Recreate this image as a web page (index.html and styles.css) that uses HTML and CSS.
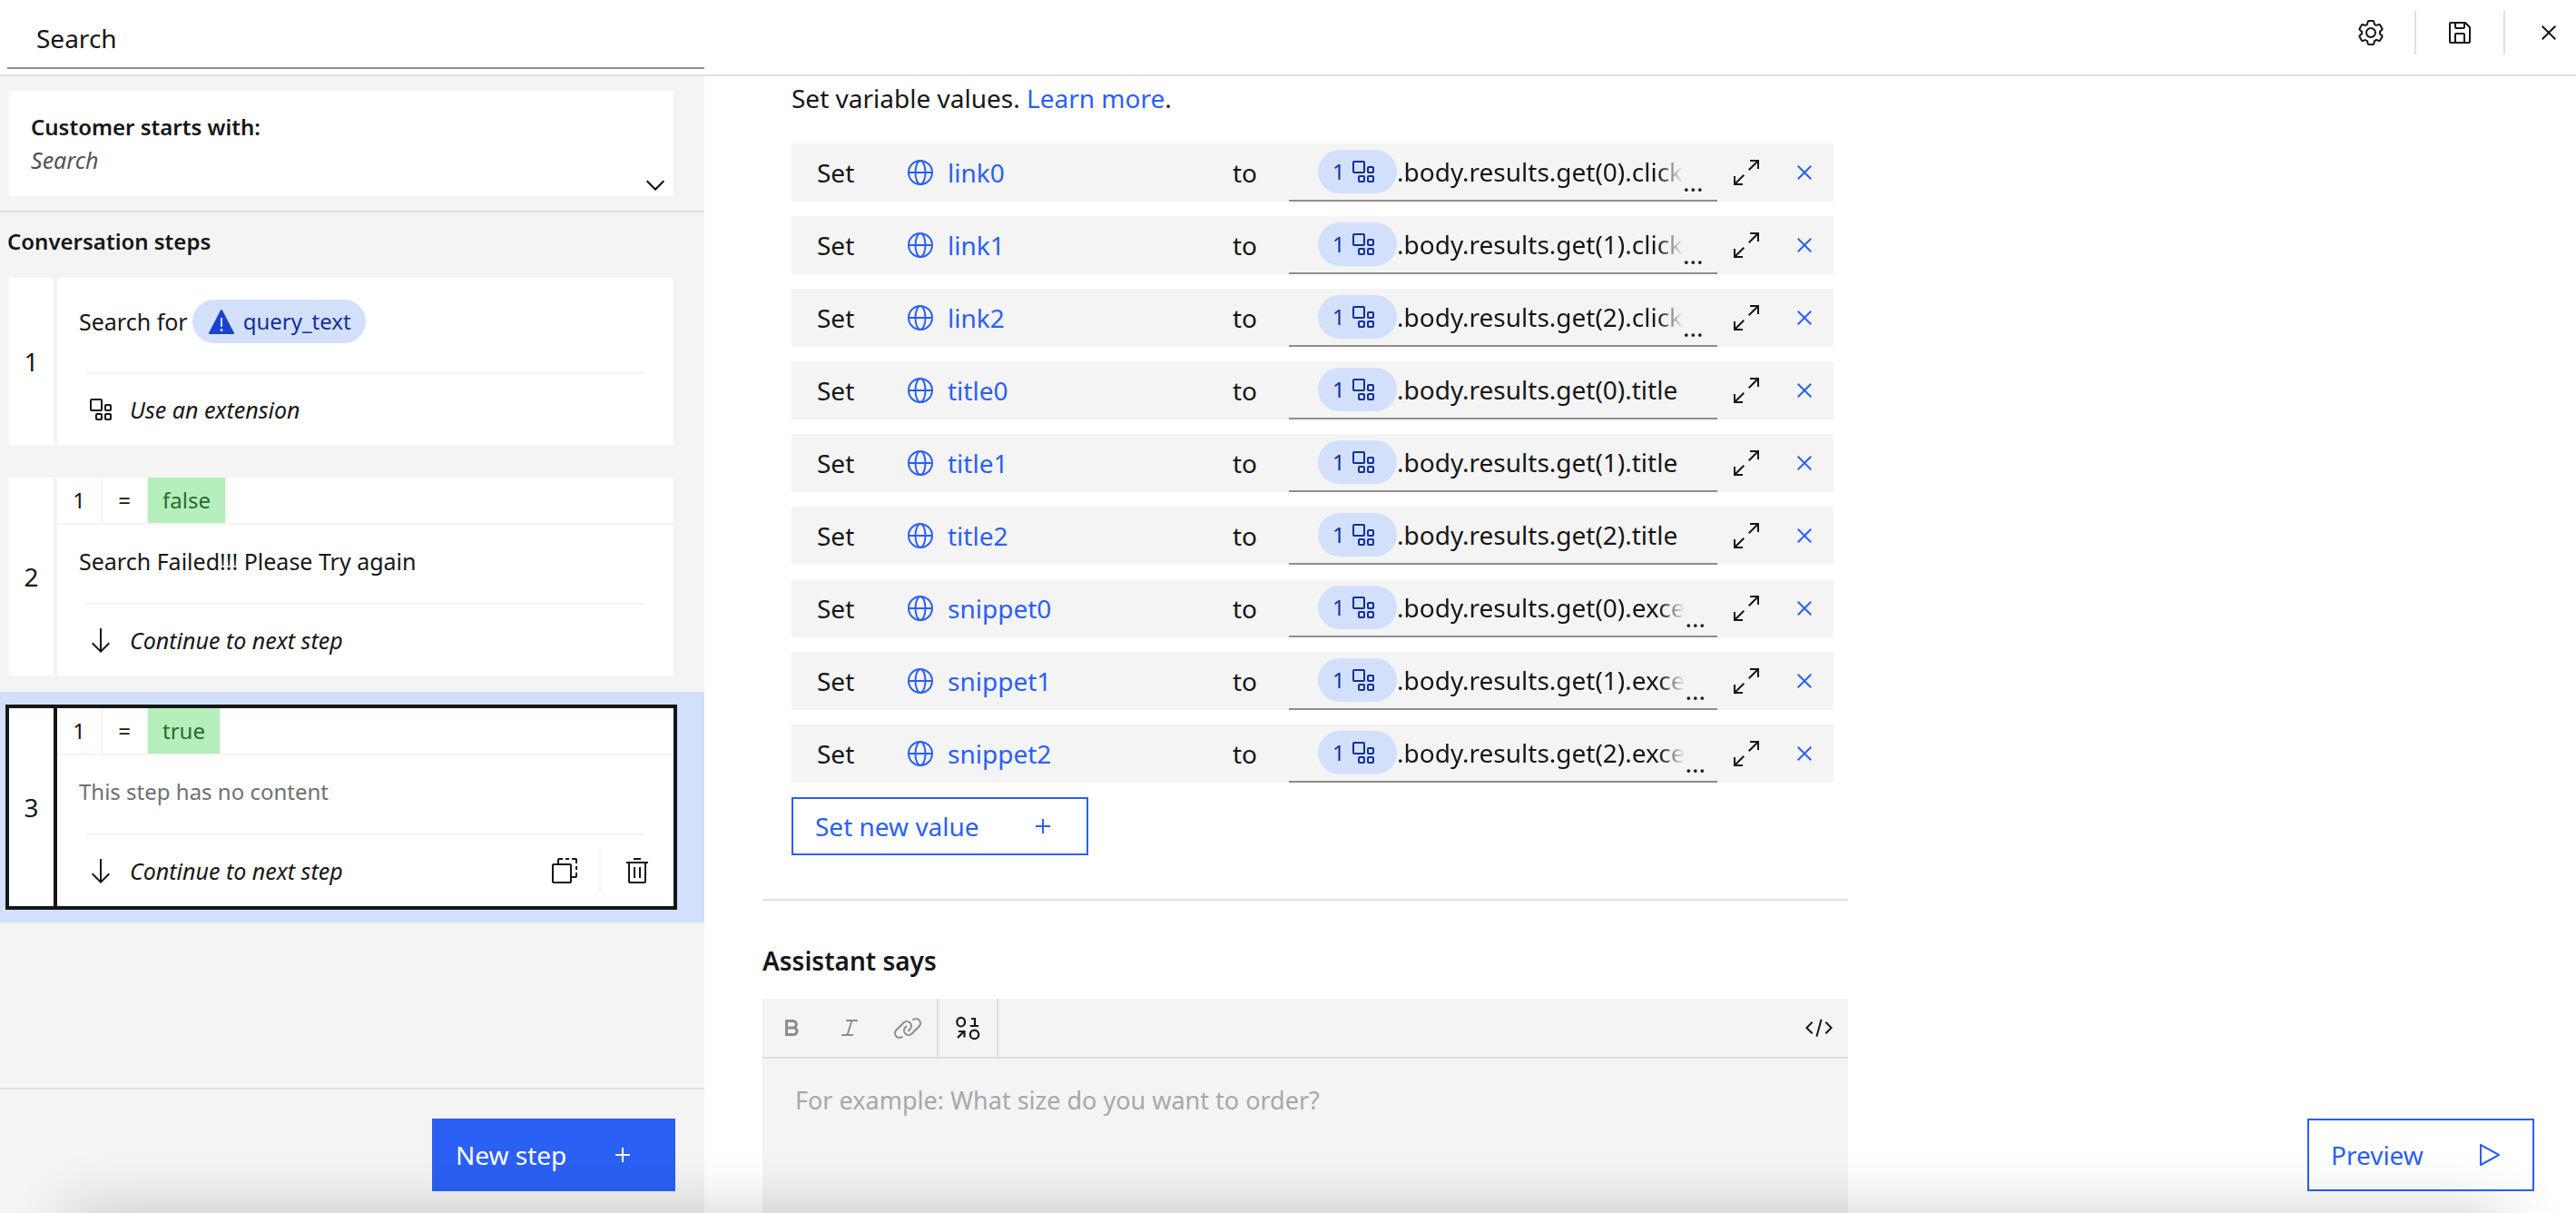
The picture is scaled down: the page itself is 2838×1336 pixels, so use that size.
FILE: index.html
```html
<!DOCTYPE html>
<html lang="en">
<head>
<meta charset="utf-8">
<title>Search</title>
<link rel="stylesheet" href="styles.css">
</head>
<body>
<svg class="sprite" aria-hidden="true">
  <symbol id="gear" viewBox="0 0 32 32"><path d="M27 16.76v-1.53l1.92-1.68A2 2 0 0 0 29.3 11l-2.36-4a2 2 0 0 0-1.73-1 2 2 0 0 0-.64.1l-2.43.82a11.35 11.35 0 0 0-1.31-.75l-.51-2.52a2 2 0 0 0-2-1.61h-4.68a2 2 0 0 0-2 1.61l-.51 2.52a11.48 11.48 0 0 0-1.32.75l-2.38-.86A2 2 0 0 0 6.79 6a2 2 0 0 0-1.73 1L2.7 11a2 2 0 0 0 .41 2.51L5 15.24v1.53l-1.89 1.68A2 2 0 0 0 2.7 21l2.36 4a2 2 0 0 0 1.73 1 2 2 0 0 0 .64-.1l2.43-.82a11.35 11.35 0 0 0 1.31.75l.51 2.52a2 2 0 0 0 2 1.61h4.72a2 2 0 0 0 2-1.61l.51-2.52a11.48 11.48 0 0 0 1.32-.75l2.42.82a2 2 0 0 0 .64.1 2 2 0 0 0 1.73-1l2.28-4a2 2 0 0 0-.41-2.51zM25.21 24l-3.43-1.16a8.86 8.86 0 0 1-2.71 1.57L18.36 28h-4.72l-.71-3.55a9.36 9.36 0 0 1-2.7-1.57L6.79 24l-2.36-4 2.72-2.4a8.9 8.9 0 0 1 0-3.13L4.43 12l2.36-4 3.43 1.16a8.86 8.86 0 0 1 2.71-1.57L13.64 4h4.72l.71 3.55a9.36 9.36 0 0 1 2.7 1.57L25.21 8l2.36 4-2.72 2.4a8.9 8.9 0 0 1 0 3.13L27.57 20z"/><path d="M16 22a6 6 0 1 1 6-6 5.94 5.94 0 0 1-6 6zm0-10a3.91 3.91 0 0 0-4 4 3.91 3.91 0 0 0 4 4 3.91 3.91 0 0 0 4-4 3.91 3.91 0 0 0-4-4z"/></symbol>
  <symbol id="save" viewBox="0 0 32 32"><path d="M27.71 9.29l-5-5A1 1 0 0 0 22 4H6a2 2 0 0 0-2 2v20a2 2 0 0 0 2 2h20a2 2 0 0 0 2-2V10a1 1 0 0 0-.29-.71zM12 6h8v4h-8zm8 20h-8v-8h8zm2 0v-8a2 2 0 0 0-2-2h-8a2 2 0 0 0-2 2v8H6V6h4v4a2 2 0 0 0 2 2h8a2 2 0 0 0 2-2V6.41l4 4V26z"/></symbol>
  <symbol id="close" viewBox="0 0 32 32"><path d="M24 9.4 22.6 8 16 14.6 9.4 8 8 9.4l6.6 6.6L8 22.6 9.4 24l6.6-6.6 6.6 6.6 1.4-1.4-6.6-6.6z"/></symbol>
  <symbol id="plus" viewBox="0 0 32 32"><path d="M17 15V8h-2v7H8v2h7v7h2v-7h7v-2z"/></symbol>
  <symbol id="chevron" viewBox="0 4 32 24"><path d="M16 22 6 12l1.4-1.4 8.6 8.6 8.6-8.6L26 12z"/></symbol>
  <symbol id="down" viewBox="0 0 32 32"><path d="M24.6 18.6 17 26.2V3h-2v23.2l-7.6-7.6L6 20l10 10 10-10z"/></symbol>
  <symbol id="extension" viewBox="0 0 32 32"><g fill="none" stroke="currentColor" stroke-width="2"><rect x="5" y="5" width="12" height="12" rx="1"/><rect x="21" y="11" width="6" height="6" rx="1"/><rect x="11" y="21" width="6" height="6" rx="1"/><rect x="21" y="21" width="6" height="6" rx="1"/></g></symbol>
  <symbol id="warning" viewBox="0 0 32 32"><path d="M29.9 28.6l-13-25a1 1 0 0 0-1.8 0l-13 25A1 1 0 0 0 3 30h26a1 1 0 0 0 .9-1.4z"/><path class="warning-mark" d="M15 12h2v10h-2zM16 24a1.500 1.500 0 1 1 0 3 1.500 1.500 0 0 1 0-3z"/></symbol>
  <symbol id="copy" viewBox="0 0 32 32"><path fill="none" stroke="currentColor" stroke-width="2" d="M4 9h18a1 1 0 0 1 1 1v18a1 1 0 0 1-1 1H4a1 1 0 0 1-1-1V10a1 1 0 0 1 1-1zM9 8V4a1 1 0 0 1 1-1h4M17 3h4M24 3h4a1 1 0 0 1 1 1v4M29 11v4M29 18v4a1 1 0 0 1-1 1h-4"/></symbol>
  <symbol id="trash" viewBox="0 0 32 32"><path d="M12 12h2v12h-2zM18 12h2v12h-2zM4 6v2h2v20a2 2 0 0 0 2 2h16a2 2 0 0 0 2-2V8h2V6zm4 22V8h16v20zM12 2h8v2h-8z"/></symbol>
  <symbol id="globe" viewBox="0 0 32 32"><g fill="none" stroke="currentColor" stroke-width="2"><circle cx="16" cy="16" r="13"/><ellipse cx="16" cy="16" rx="5.5" ry="13"/><path d="M3 16h26"/></g></symbol>
  <symbol id="expand" viewBox="0 0 32 32"><path d="M20 2v2h6.6L18 12.6l1.4 1.4L28 5.4V12h2V2zM14 19.4 12.6 18 4 26.6V20H2v10h10v-2H5.400z"/></symbol>
  <symbol id="bold" viewBox="0 0 32 32"><path d="M18.25 25H9V7h8.5a5.25 5.25 0 0 1 4 8.65A5.25 5.25 0 0 1 18.25 25zM12 22h6.23a2.25 2.25 0 1 0 0-4.5H12zm0-7.5h5.5a2.25 2.25 0 1 0 0-4.5H12z"/></symbol>
  <symbol id="italic" viewBox="0 0 32 32"><path d="M25 9V7H12v2h5.14l-4.37 14H7v2h13v-2h-5.14l4.37-14z"/></symbol>
  <symbol id="link" viewBox="0 0 32 32"><path d="M29.25 6.76a6 6 0 0 0-8.5 0l1.42 1.42a4 4 0 1 1 5.67 5.67l-8 8a4 4 0 1 1-5.67-5.66l1.41-1.42-1.41-1.42-1.42 1.42a6 6 0 0 0 0 8.5A6 6 0 0 0 17 25a6 6 0 0 0 4.27-1.76l8-8a6 6 0 0 0-.02-8.48z"/><path d="M4.19 24.82a4 4 0 0 1 0-5.67l8-8a4 4 0 0 1 5.67 0A3.94 3.94 0 0 1 19 14a4 4 0 0 1-1.17 2.85L15.71 19l1.42 1.42 2.12-2.12a6 6 0 0 0-8.51-8.51l-8 8a6 6 0 0 0 0 8.51A6 6 0 0 0 7 28a6.07 6.07 0 0 0 4.28-1.76l-1.42-1.42a4 4 0 0 1-5.67 0z"/></symbol>
  <symbol id="variable" viewBox="0 0 32 32"><g fill="none" stroke="currentColor" stroke-width="2.200"><ellipse cx="8.700" cy="9.700" rx="4.400" ry="4.800"/><ellipse cx="23.500" cy="23.400" rx="4.700" ry="4.800"/><path d="M20 6h4v8M19 14h9M5 27l7-7M6 20h6.500v6.500"/></g></symbol>
  <symbol id="code" viewBox="0 0 32 32"><path d="M31 16l-7 7-1.41-1.41L28.17 16l-5.58-5.59L24 9zM1 16l7-7 1.41 1.41L3.83 16l5.58 5.59L8 23zM12.42 25.48l5.22-18.93 1.93.53-5.22 18.94z"/></symbol>
  <symbol id="play" viewBox="0 0 32 32"><path d="M7 28a1 1 0 0 1-1-1V5a1 1 0 0 1 1.48-.88l20 11a1 1 0 0 1 0 1.76l-20 11A1 1 0 0 1 7 28zM8 6.69v18.62L24.93 16z"/></symbol>
</svg>

<header class="header">
  <input class="title-input" type="text" value="Search" aria-label="Action name">
  <div class="header-actions">
    <button class="header-button" type="button" aria-label="Settings"><svg class="icon"><use href="#gear"/></svg></button>
    <button class="header-button" type="button" aria-label="Save"><svg class="icon"><use href="#save"/></svg></button>
    <button class="header-button" type="button" aria-label="Close"><svg class="icon"><use href="#close"/></svg></button>
  </div>
</header>

<div class="workspace">
  <aside class="sidebar">
    <section class="trigger">
      <div class="trigger-card">
        <div class="trigger-text">
          <h2 class="trigger-title">Customer starts with:</h2>
          <p class="trigger-phrase">Search</p>
        </div>
        <button class="trigger-toggle" type="button" aria-label="Show phrases"><svg class="chevron"><use href="#chevron"/></svg></button>
      </div>
    </section>

    <div class="steps">
      <h2 class="steps-title">Conversation steps</h2>
      <ol class="step-list">
        <li class="step">
          <article class="step-card">
            <div class="step-number">1</div>
            <div class="step-body">
              <p class="step-text">Search for <span class="pill"><svg class="icon pill-warning"><use href="#warning"/></svg>query_text</span></p>
              <div class="step-footer"><svg class="icon"><use href="#extension"/></svg><span class="step-next">Use an extension</span></div>
            </div>
          </article>
        </li>
        <li class="step">
          <article class="step-card">
            <div class="step-number">2</div>
            <div class="step-body">
              <div class="condition"><span class="condition-cell">1</span><span class="condition-cell">=</span><span class="condition-cell condition-value">false</span></div>
              <p class="step-text">Search Failed!!! Please Try again</p>
              <div class="step-footer"><svg class="icon"><use href="#down"/></svg><span class="step-next">Continue to next step</span></div>
            </div>
          </article>
        </li>
        <li class="step step-selected">
          <article class="step-card">
            <div class="step-number">3</div>
            <div class="step-body">
              <div class="condition"><span class="condition-cell">1</span><span class="condition-cell">=</span><span class="condition-cell condition-value">true</span></div>
              <p class="step-text step-empty">This step has no content</p>
              <div class="step-footer"><svg class="icon"><use href="#down"/></svg><span class="step-next">Continue to next step</span>
                <div class="step-tools">
                  <button class="step-tool" type="button" aria-label="Duplicate step"><svg class="icon"><use href="#copy"/></svg></button>
                  <button class="step-tool" type="button" aria-label="Delete step"><svg class="icon"><use href="#trash"/></svg></button>
                </div>
              </div>
            </div>
          </article>
        </li>
      </ol>
    </div>

    <div class="sidebar-footer">
      <button class="button button-primary" type="button">New step<svg class="icon"><use href="#plus"/></svg></button>
    </div>
  </aside>

  <main class="editor">
    <section class="variables">
      <p class="variables-intro">Set variable values. <a class="link" href="#">Learn more</a>.</p>
      <ul class="variable-list">
        <li class="variable">
          <span class="variable-set">Set</span>
          <button class="variable-name" type="button"><svg class="icon"><use href="#globe"/></svg>link0</button>
          <span>to</span>
          <div class="expression expression-clipped"><div class="expression-text"><span class="pill pill-step">1<svg class="icon"><use href="#extension"/></svg></span>.body.results.get(0).click</div><span class="expression-more">...</span></div>
          <button class="row-button" type="button" aria-label="Expand link0"><svg class="icon"><use href="#expand"/></svg></button>
          <button class="row-button row-remove" type="button" aria-label="Remove link0"><svg class="icon"><use href="#close"/></svg></button>
        </li>
        <li class="variable">
          <span class="variable-set">Set</span>
          <button class="variable-name" type="button"><svg class="icon"><use href="#globe"/></svg>link1</button>
          <span>to</span>
          <div class="expression expression-clipped"><div class="expression-text"><span class="pill pill-step">1<svg class="icon"><use href="#extension"/></svg></span>.body.results.get(1).click</div><span class="expression-more">...</span></div>
          <button class="row-button" type="button" aria-label="Expand link1"><svg class="icon"><use href="#expand"/></svg></button>
          <button class="row-button row-remove" type="button" aria-label="Remove link1"><svg class="icon"><use href="#close"/></svg></button>
        </li>
        <li class="variable">
          <span class="variable-set">Set</span>
          <button class="variable-name" type="button"><svg class="icon"><use href="#globe"/></svg>link2</button>
          <span>to</span>
          <div class="expression expression-clipped"><div class="expression-text"><span class="pill pill-step">1<svg class="icon"><use href="#extension"/></svg></span>.body.results.get(2).click</div><span class="expression-more">...</span></div>
          <button class="row-button" type="button" aria-label="Expand link2"><svg class="icon"><use href="#expand"/></svg></button>
          <button class="row-button row-remove" type="button" aria-label="Remove link2"><svg class="icon"><use href="#close"/></svg></button>
        </li>
        <li class="variable">
          <span class="variable-set">Set</span>
          <button class="variable-name" type="button"><svg class="icon"><use href="#globe"/></svg>title0</button>
          <span>to</span>
          <div class="expression"><div class="expression-text"><span class="pill pill-step">1<svg class="icon"><use href="#extension"/></svg></span>.body.results.get(0).title</div></div>
          <button class="row-button" type="button" aria-label="Expand title0"><svg class="icon"><use href="#expand"/></svg></button>
          <button class="row-button row-remove" type="button" aria-label="Remove title0"><svg class="icon"><use href="#close"/></svg></button>
        </li>
        <li class="variable">
          <span class="variable-set">Set</span>
          <button class="variable-name" type="button"><svg class="icon"><use href="#globe"/></svg>title1</button>
          <span>to</span>
          <div class="expression"><div class="expression-text"><span class="pill pill-step">1<svg class="icon"><use href="#extension"/></svg></span>.body.results.get(1).title</div></div>
          <button class="row-button" type="button" aria-label="Expand title1"><svg class="icon"><use href="#expand"/></svg></button>
          <button class="row-button row-remove" type="button" aria-label="Remove title1"><svg class="icon"><use href="#close"/></svg></button>
        </li>
        <li class="variable">
          <span class="variable-set">Set</span>
          <button class="variable-name" type="button"><svg class="icon"><use href="#globe"/></svg>title2</button>
          <span>to</span>
          <div class="expression"><div class="expression-text"><span class="pill pill-step">1<svg class="icon"><use href="#extension"/></svg></span>.body.results.get(2).title</div></div>
          <button class="row-button" type="button" aria-label="Expand title2"><svg class="icon"><use href="#expand"/></svg></button>
          <button class="row-button row-remove" type="button" aria-label="Remove title2"><svg class="icon"><use href="#close"/></svg></button>
        </li>
        <li class="variable">
          <span class="variable-set">Set</span>
          <button class="variable-name" type="button"><svg class="icon"><use href="#globe"/></svg>snippet0</button>
          <span>to</span>
          <div class="expression expression-clipped"><div class="expression-text"><span class="pill pill-step">1<svg class="icon"><use href="#extension"/></svg></span>.body.results.get(0).exce</div><span class="expression-more">...</span></div>
          <button class="row-button" type="button" aria-label="Expand snippet0"><svg class="icon"><use href="#expand"/></svg></button>
          <button class="row-button row-remove" type="button" aria-label="Remove snippet0"><svg class="icon"><use href="#close"/></svg></button>
        </li>
        <li class="variable">
          <span class="variable-set">Set</span>
          <button class="variable-name" type="button"><svg class="icon"><use href="#globe"/></svg>snippet1</button>
          <span>to</span>
          <div class="expression expression-clipped"><div class="expression-text"><span class="pill pill-step">1<svg class="icon"><use href="#extension"/></svg></span>.body.results.get(1).exce</div><span class="expression-more">...</span></div>
          <button class="row-button" type="button" aria-label="Expand snippet1"><svg class="icon"><use href="#expand"/></svg></button>
          <button class="row-button row-remove" type="button" aria-label="Remove snippet1"><svg class="icon"><use href="#close"/></svg></button>
        </li>
        <li class="variable">
          <span class="variable-set">Set</span>
          <button class="variable-name" type="button"><svg class="icon"><use href="#globe"/></svg>snippet2</button>
          <span>to</span>
          <div class="expression expression-clipped"><div class="expression-text"><span class="pill pill-step">1<svg class="icon"><use href="#extension"/></svg></span>.body.results.get(2).exce</div><span class="expression-more">...</span></div>
          <button class="row-button" type="button" aria-label="Expand snippet2"><svg class="icon"><use href="#expand"/></svg></button>
          <button class="row-button row-remove" type="button" aria-label="Remove snippet2"><svg class="icon"><use href="#close"/></svg></button>
        </li>
      </ul>
      <button class="button button-outline button-compact" type="button">Set new value<svg class="icon"><use href="#plus"/></svg></button>
    </section>

    <section class="response">
      <label class="response-title" for="says">Assistant says</label>
      <div class="response-box">
        <div class="toolbar">
          <div class="tool-group">
            <button class="tool tool-muted" type="button" aria-label="Bold"><svg class="icon"><use href="#bold"/></svg></button>
            <button class="tool tool-muted" type="button" aria-label="Italic"><svg class="icon"><use href="#italic"/></svg></button>
            <button class="tool tool-muted" type="button" aria-label="Link"><svg class="icon"><use href="#link"/></svg></button>
          </div>
          <div class="tool-group">
            <button class="tool" type="button" aria-label="Insert variable"><svg class="icon"><use href="#variable"/></svg></button>
          </div>
          <button class="tool tool-end" type="button" aria-label="Edit as JSON"><svg class="icon"><use href="#code"/></svg></button>
        </div>
        <textarea class="response-input" id="says" placeholder="For example: What size do you want to order?"></textarea>
      </div>
    </section>
  </main>
</div>

<button class="button button-outline preview" type="button">Preview<svg class="icon"><use href="#play"/></svg></button>
<div class="bottom-shade"></div>
</body>
</html>
```
FILE: styles.css
```css
:root {
  --ink: #161616;
  --grey: #f4f4f4;
  --line: #e0e0e0;
  --blue: #2b60f5;
  --pale: #d3e0fc;
  --navy: #10309a;
}

* {
  box-sizing: border-box;
  margin: 0;
  padding: 0;
}

body {
  display: flex;
  flex-direction: column;
  height: 100vh;
  overflow: hidden;
  background: #fff;
  color: var(--ink);
  font: 28px/36px "Noto Sans", "Open Sans", sans-serif;
}

button,
input,
textarea {
  border: 0;
  background: none;
  color: inherit;
  font: inherit;
}

ul,
ol {
  list-style: none;
}

.sprite {
  position: absolute;
  width: 0;
  height: 0;
}

.icon {
  display: block;
  flex: none;
  width: 32px;
  height: 32px;
  fill: currentColor;
}

/* Header */

.header {
  display: flex;
  flex: none;
  justify-content: space-between;
  height: 84px;
  padding-left: 8px;
  border-bottom: 2px solid var(--line);
}

.title-input {
  width: 768px;
  height: 76px;
  padding: 10px 32px 0;
  border-bottom: 2px solid #8d8d8d;
}

.header-actions {
  display: flex;
  padding-top: 12px;
}

.header-button {
  display: flex;
  align-items: center;
  height: 48px;
  padding: 0 32px;
}

.header-button + .header-button {
  border-left: 2px solid var(--line);
}

.header-button:last-child {
  padding-right: 14px;
}

.workspace {
  display: flex;
  flex: 1;
  min-height: 0;
}

/* Sidebar */

.sidebar {
  display: flex;
  flex: none;
  flex-direction: column;
  width: 776px;
  background: var(--grey);
}

.trigger {
  padding: 16px 34px 16px 10px;
  border-bottom: 2px solid var(--line);
}

.trigger-card {
  display: flex;
  align-items: flex-end;
  justify-content: space-between;
  background: #fff;
}

.trigger-text {
  padding: 22px 24px 20px;
}

.trigger-title,
.steps-title {
  font-size: 24px;
  font-weight: 600;
}

.trigger-phrase {
  padding-bottom: 2px;
  color: #525252;
  font-size: 25px;
  font-style: italic;
}

.trigger-toggle {
  padding-right: 4px;
}

.chevron {
  display: block;
  width: 32px;
  height: 24px;
}

.steps {
  flex: 1;
}

.steps-title {
  padding: 14px 8px 4px;
}

.step {
  padding: 18px 34px 18px 10px;
}

.step-selected {
  background: var(--pale);
}

.step-card {
  display: flex;
  background: #fff;
}

.step-number {
  display: flex;
  flex: none;
  align-items: center;
  justify-content: center;
  width: 53px;
  border-right: 4px solid var(--grey);
}

.step-selected .step-card {
  box-shadow: 0 0 0 4px var(--ink);
}

.step-selected .step-number {
  border-color: var(--ink);
}

.step-body {
  flex: 1;
}

.condition {
  display: flex;
  border-bottom: 2px solid var(--grey);
  font-size: 24px;
}

.condition-cell {
  min-width: 50px;
  height: 50px;
  border-right: 2px solid var(--grey);
  line-height: 50px;
  text-align: center;
}

.condition-value {
  padding: 0 16px;
  background: #b6efbc;
  background-clip: padding-box;
  color: #2b6a33;
}

.step-text {
  display: flex;
  align-items: center;
  gap: 5px;
  padding: 24px 24px 32px;
  font-size: 25px;
  line-height: 32px;
}

.condition + .step-text {
  padding-bottom: 30px;
}

.step-empty {
  color: #6f6f6f;
  font-size: 24px;
}

.step-footer {
  display: flex;
  align-items: center;
  gap: 16px;
  height: 80px;
  margin: 0 32px;
  border-top: 2px solid var(--grey);
}

.step-next {
  font-size: 25px;
  font-style: italic;
}

.step-tools {
  display: flex;
  margin: 0 -8px 0 auto;
}

.step-tool {
  display: flex;
  align-items: center;
  height: 48px;
  padding-right: 22px;
}

.step-tool + .step-tool {
  padding: 0 0 0 24px;
  border-left: 2px solid var(--grey);
}

.pill {
  display: inline-flex;
  align-items: center;
  gap: 8px;
  height: 48px;
  padding: 0 16px;
  border-radius: 24px;
  background: var(--pale);
  color: var(--navy);
  font-size: 24px;
}

.pill-warning {
  color: #1a42cf;
}

.warning-mark {
  fill: var(--pale);
}

.sidebar-footer {
  display: flex;
  justify-content: flex-end;
  padding: 32px 32px 24px;
  border-top: 2px solid var(--line);
}

/* Buttons */

.button {
  display: flex;
  align-items: center;
  justify-content: space-between;
  height: 80px;
  padding: 0 32px 0 24px;
  border: 2px solid var(--blue);
  white-space: nowrap;
}

.button-primary {
  width: 268px;
  padding-right: 40px;
  background: var(--blue);
  color: #fff;
}

.button-outline {
  color: var(--blue);
}

.button-compact {
  width: 327px;
  height: 64px;
}

/* Editor */

.editor {
  display: flex;
  flex: 1;
  flex-direction: column;
  max-width: 1260px;
  padding: 6px 0 0 64px;
  overflow: hidden;
}

.variables {
  padding: 0 16px 48px 32px;
  border-bottom: 2px solid var(--line);
}

.variables-intro {
  padding-bottom: 32px;
}

.link {
  color: var(--blue);
  text-decoration: none;
}

.variable-list {
  display: grid;
  gap: 16px;
  padding-bottom: 16px;
}

.variable {
  display: grid;
  grid-template-columns: 126px 1fr 62px 472px 64px 64px;
  align-items: center;
  height: 64px;
  background: var(--grey);
}

.variable-set {
  padding-left: 28px;
}

.variable-name {
  display: flex;
  align-items: center;
  gap: 14px;
  color: var(--blue);
}

.expression {
  display: flex;
  align-items: center;
  height: 64px;
  padding: 0 16px 0 32px;
  border-bottom: 2px solid #8d8d8d;
}

.expression-text {
  display: flex;
  align-items: center;
  white-space: nowrap;
}

.expression-clipped {
  justify-content: space-between;
}

.expression-clipped .expression-text {
  mask-image: linear-gradient(to left, transparent, #000 28px);
}

.expression-more {
  align-self: flex-end;
  padding-bottom: 2px;
}

.pill-step {
  flex: none;
  gap: 4px;
  width: 87px;
}

.row-button {
  display: flex;
  justify-content: center;
}

.row-remove {
  color: var(--blue);
}

.response {
  display: flex;
  flex: 1;
  flex-direction: column;
}

.response-title {
  padding: 48px 0 24px;
  font-weight: 600;
}

.response-box {
  display: flex;
  flex: 1;
  flex-direction: column;
  background: var(--grey);
}

.toolbar {
  display: flex;
  flex: none;
  border-bottom: 2px solid var(--line);
}

.tool-group {
  display: flex;
  border-right: 2px solid var(--line);
}

.tool {
  display: flex;
  align-items: center;
  justify-content: center;
  width: 64px;
  height: 64px;
}

.tool-muted {
  color: #8d8d8d;
}

.tool-end {
  margin-left: auto;
}

.response-input {
  flex: 1;
  padding: 28px 36px;
  font-size: 27px;
  resize: none;
}

.response-input::placeholder {
  color: #a8a8a8;
}

/* Floating over the page */

.preview {
  position: fixed;
  right: 46px;
  bottom: 24px;
  width: 250px;
  background: #fff;
}

.bottom-shade {
  position: fixed;
  top: 100%;
  right: 76px;
  left: 76px;
  height: 200px;
  box-shadow: 0 0 70px rgba(0, 0, 0, 0.2);
  pointer-events: none;
}
```
